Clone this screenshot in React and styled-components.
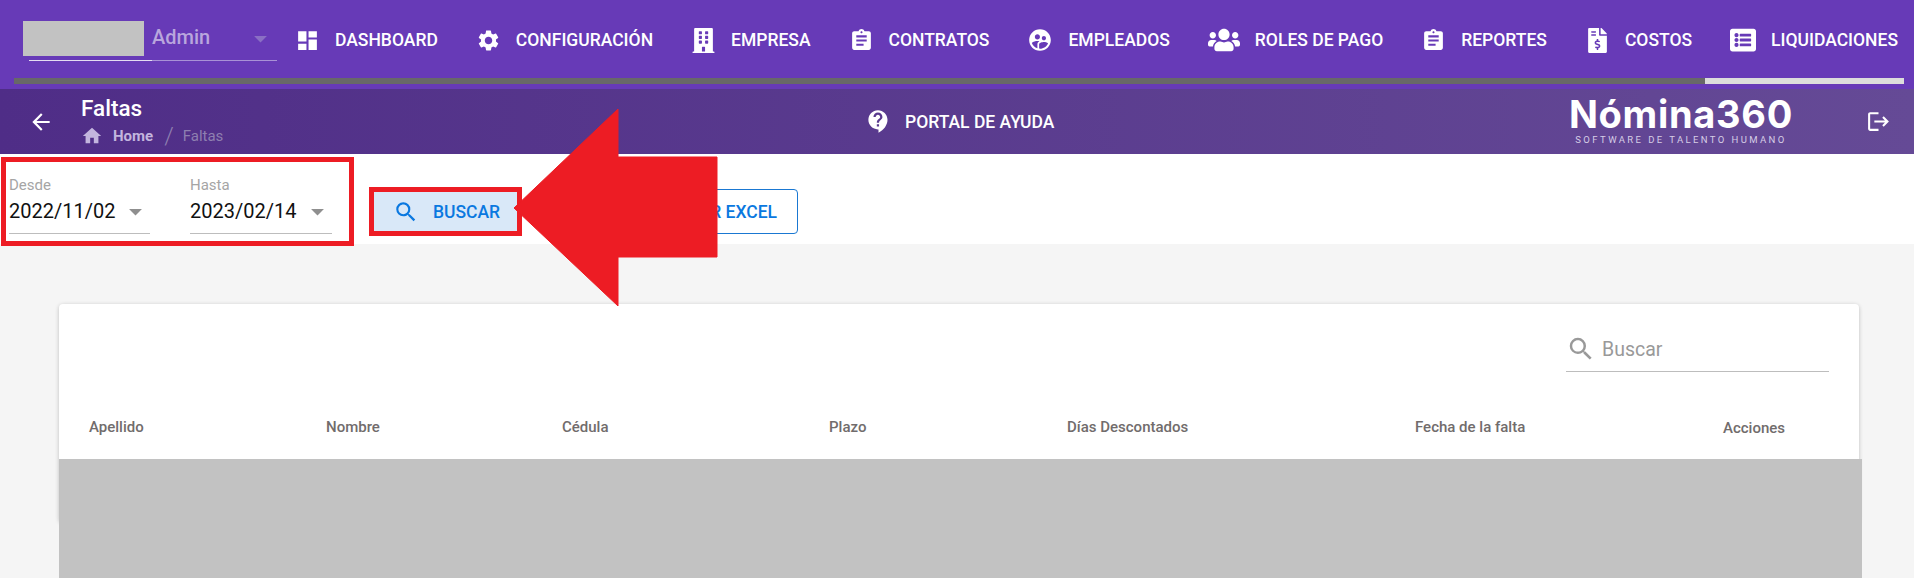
import React from "react";
import styled, { createGlobalStyle } from "styled-components";
import {
  MdDashboard,
  MdSettings,
  MdAssignment,
  MdSupervisedUserCircle,
  MdHome,
  MdArrowBack,
  MdArrowDropDown,
  MdSearch,
  MdContactSupport,
  MdLogout,
} from "react-icons/md";
import { FaBuilding, FaUsers, FaFileInvoiceDollar, FaListAlt } from "react-icons/fa";

const GlobalStyle = createGlobalStyle`
  html, body {
    margin: 0;
    padding: 0;
    background: #f5f5f5;
    font-family: Roboto, "Liberation Sans", sans-serif;
    overflow: hidden;
  }
`;

const NAV_ITEMS = [
  { label: "Dashboard", icon: <MdDashboard size={25} /> },
  { label: "Configuración", icon: <MdSettings size={25} /> },
  { label: "Empresa", icon: <FaBuilding size={25} /> },
  { label: "Contratos", icon: <MdAssignment size={25} /> },
  { label: "Empleados", icon: <MdSupervisedUserCircle size={26} /> },
  { label: "Roles de pago", icon: <FaUsers size={32} /> },
  { label: "Reportes", icon: <MdAssignment size={25} /> },
  { label: "Costos", icon: <FaFileInvoiceDollar size={25} /> },
  { label: "Liquidaciones", icon: <FaListAlt size={26} /> },
];

const COLUMNS = ["Apellido", "Nombre", "Cédula", "Plazo", "Días Descontados", "Fecha de la falta", "Acciones"];

const App = () => {
  return (
    <Page>
      <GlobalStyle />
      <TopBar>
        <NavRow>
          <UserSelect>
            <Avatar />
            <UserName>Admin</UserName>
            <MdArrowDropDown size={31} />
          </UserSelect>
          <Tabs>
            {NAV_ITEMS.map((item) => (
              <Tab key={item.label}>
                {item.icon}
                <span>{item.label}</span>
              </Tab>
            ))}
          </Tabs>
        </NavRow>
        <ScrollTrack>
          <ScrollThumb />
        </ScrollTrack>
      </TopBar>

      <SubHeader>
        <TitleGroup>
          <MdArrowBack size={26} />
          <div>
            <PageTitle>Faltas</PageTitle>
            <Crumbs>
              <MdHome size={22} />
              <CrumbHome>Home</CrumbHome>
              <CrumbSep>/</CrumbSep>
              <span>Faltas</span>
            </Crumbs>
          </div>
        </TitleGroup>
        <HelpLink>
          <MdContactSupport size={27} />
          <span>PORTAL DE AYUDA</span>
        </HelpLink>
        <LogoGroup>
          <Logo>
            <LogoName>Nómina360</LogoName>
            <LogoTag>SOFTWARE DE TALENTO HUMANO</LogoTag>
          </Logo>
          <MdLogout size={25} />
        </LogoGroup>
      </SubHeader>

      <Toolbar>
        <DateBox>
          <DateField>
            <DateLabel>Desde</DateLabel>
            <DateValue>
              2022/11/02
              <MdArrowDropDown size={31} />
            </DateValue>
          </DateField>
          <DateField $wide>
            <DateLabel>Hasta</DateLabel>
            <DateValue>
              2023/02/14
              <MdArrowDropDown size={31} />
            </DateValue>
          </DateField>
        </DateBox>
        <SearchButton>
          <MdSearch size={26} />
          BUSCAR
        </SearchButton>
        <ExportButton>EXPORTAR EXCEL</ExportButton>
      </Toolbar>

      <Content>
        <Card>
          <CardTop>
            <SearchField>
              <MdSearch size={30} />
              <span>Buscar</span>
            </SearchField>
          </CardTop>
          <HeaderRow>
            {COLUMNS.map((name) => (
              <HeaderCell key={name}>{name}</HeaderCell>
            ))}
          </HeaderRow>
        </Card>
        <Redacted />
      </Content>

      <BigArrow viewBox="0 0 204 197" aria-hidden="true">
        <path
          d="M104 0 L0 99 L104 197 L104 148 L203 148 L203 48 L104 48 Z"
          fill="#ed1c24"
          stroke="#ed1c24"
          strokeWidth="1"
          strokeLinejoin="round"
        />
      </BigArrow>
    </Page>
  );
};

const Page = styled.div`
  position: relative;
  width: 1914px;
  height: 578px;
  overflow: hidden;
  background: #f5f5f5;
`;

const TopBar = styled.header`
  height: 89px;
  background: #673ab7;
  color: #fff;
`;

const NavRow = styled.div`
  display: flex;
  align-items: flex-start;
  height: 78px;
  padding-left: 29px;
`;

const UserSelect = styled.div`
  display: flex;
  align-items: flex-start;
  width: 248px;
  height: 39px;
  margin-top: 21px;
  color: #b9a6dd;
  border-bottom: 1px solid;
  border-image: linear-gradient(90deg, #e4ddf2 123px, #a992d6 123px) 1;

  svg {
    margin: 2px 0 0 35px;
    color: #8a6fc4;
  }
`;

const Avatar = styled.div`
  flex: none;
  width: 121px;
  height: 35px;
  margin-left: -6px;
  background: #c2c2c2;
`;

const UserName = styled.span`
  margin: 3px 0 0 8px;
  font-size: 20px;
  font-weight: 500;
  line-height: 26px;
`;

const Tabs = styled.nav`
  display: flex;
  align-items: center;
  gap: 38px;
  height: 80px;
  margin-left: 18px;
`;

const Tab = styled.div`
  display: flex;
  align-items: center;
  gap: 15px;
  font-size: 17.5px;
  font-weight: 500;
  text-transform: uppercase;
  white-space: nowrap;
`;

const ScrollTrack = styled.div`
  height: 6px;
  margin: 0 10px 0 14px;
  background: #dcdcdc;
`;

const ScrollThumb = styled.div`
  width: 1691px;
  height: 100%;
  background: #686868;
`;

const SubHeader = styled.div`
  display: grid;
  grid-template-columns: 865px 1fr auto;
  align-items: center;
  height: 65px;
  background: linear-gradient(90deg, #4f2d87 0%, #654a96 100%);
  color: #fff;
`;

const TitleGroup = styled.div`
  display: flex;
  align-items: center;
  gap: 27px;
  padding-left: 28px;
`;

const PageTitle = styled.div`
  font-size: 22.5px;
  font-weight: 500;
  line-height: 26px;
`;

const Crumbs = styled.div`
  display: flex;
  align-items: center;
  height: 24px;
  margin-top: 3px;
  font-size: 15px;
  color: #8e7fb0;
  gap: 11px;

  svg {
    color: #c3b5de;
  }
`;

const CrumbHome = styled.span`
  margin-left: -1px;
  color: #c3b5de;
  font-weight: 700;
`;

const CrumbSep = styled.span`
  margin-right: -2px;
  font-size: 24px;
  font-weight: 300;
`;

const HelpLink = styled.div`
  display: flex;
  align-items: center;
  gap: 13px;
  font-size: 17.5px;
  font-weight: 500;
`;

const LogoGroup = styled.div`
  display: flex;
  align-items: center;
  gap: 73px;
  padding-right: 23px;
`;

const Logo = styled.div`
  display: flex;
  flex-direction: column;
  align-items: center;
  width: 224px;
  margin-bottom: 5px;
`;

const LogoName = styled.div`
  font-family: Inter, Roboto, sans-serif;
  font-size: 38px;
  font-weight: 700;
  line-height: 40px;
  letter-spacing: 0.7px;
`;

const LogoTag = styled.div`
  font-family: Roboto, sans-serif;
  font-size: 9.5px;
  line-height: 11px;
  letter-spacing: 2.4px;
  color: #d6cde6;
  white-space: nowrap;
`;

const Toolbar = styled.div`
  display: flex;
  align-items: flex-start;
  height: 90px;
  background: #fff;
`;

const DateBox = styled.div`
  display: flex;
  gap: 40px;
  box-sizing: border-box;
  width: 353px;
  height: 89px;
  margin: 3px 0 0 1px;
  padding: 14px 0 0 3px;
  border: 5px solid #ed1c24;
`;

const DateField = styled.div`
  width: ${(props) => (props.$wide ? "142px" : "141px")};
  height: 57px;
  border-bottom: 1px solid #bdbdbd;
`;

const DateLabel = styled.div`
  font-size: 15px;
  line-height: 18px;
  color: #a5a5a5;
`;

const DateValue = styled.div`
  display: flex;
  align-items: center;
  justify-content: space-between;
  height: 30px;
  margin-top: 2px;
  font-size: 20px;
  color: #111;

  svg {
    flex: none;
    color: #8f8f8f;
    margin-right: -1px;
  }
`;

const SearchButton = styled.div`
  display: flex;
  align-items: center;
  gap: 14px;
  box-sizing: border-box;
  width: 153px;
  height: 49px;
  margin: 33px 0 0 15px;
  padding-left: 19px;
  background: #d9e8f8;
  border: 5px solid #ed1c24;
  color: #0a78e0;
  font-size: 17.5px;
  font-weight: 500;
`;

const ExportButton = styled.div`
  display: flex;
  align-items: center;
  justify-content: flex-end;
  box-sizing: border-box;
  width: 238px;
  height: 45px;
  margin: 35px 0 0 38px;
  padding-right: 20px;
  border: 1px solid #1a78d2;
  border-radius: 4px;
  color: #0a78e0;
  font-size: 17.5px;
  font-weight: 500;
`;

const Content = styled.main`
  position: relative;
  height: 334px;
  padding: 60px 55px 0 59px;
  box-sizing: border-box;
`;

const Card = styled.section`
  height: 218px;
  background: #fff;
  border-radius: 4px;
  box-shadow: 0 1px 4px rgba(0, 0, 0, 0.22);
`;

const CardTop = styled.div`
  display: flex;
  justify-content: flex-end;
  height: 105px;
  padding: 29px 30px 0 0;
  box-sizing: border-box;
`;

const SearchField = styled.div`
  display: flex;
  align-items: center;
  gap: 6px;
  box-sizing: border-box;
  width: 263px;
  height: 39px;
  padding-bottom: 6px;
  border-bottom: 1px solid #bdbdbd;
  color: #999;
  font-size: 19.5px;
`;

const HeaderRow = styled.div`
  display: grid;
  grid-template-columns: 237px 236px 267px 238px 348px 308px 1fr;
  padding-left: 30px;
  margin-top: 8px;
`;

const HeaderCell = styled.div`
  font-size: 15px;
  font-weight: 500;
  line-height: 20px;
  color: #716c6c;

  &:last-child {
    padding-top: 1px;
  }
`;

const Redacted = styled.div`
  position: absolute;
  left: 59px;
  top: 215px;
  width: 1803px;
  height: 119px;
  background: #c2c2c2;
`;

const BigArrow = styled.svg`
  position: absolute;
  left: 514px;
  top: 109px;
  width: 204px;
  height: 197px;
`;

export default App;
